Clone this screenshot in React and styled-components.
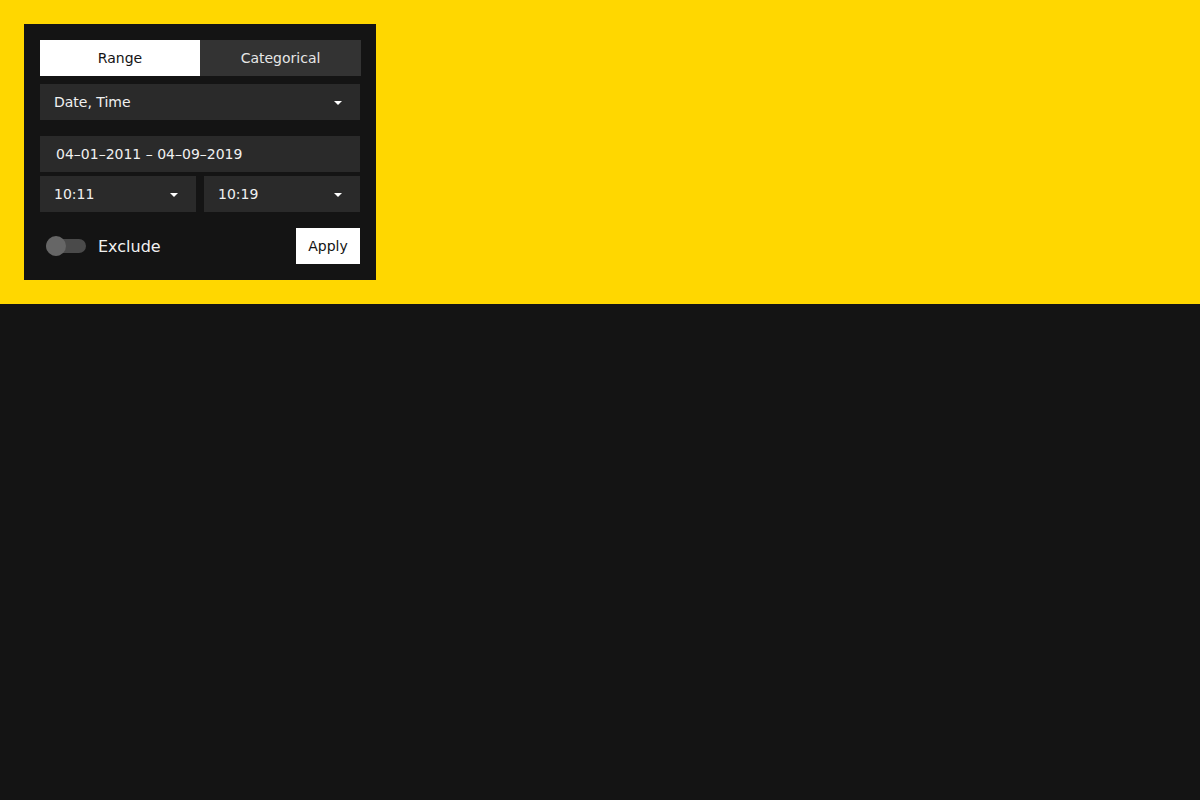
import React, { useState } from "react";
import styled, { createGlobalStyle } from "styled-components";

const Global = createGlobalStyle`
  html, body { margin: 0; padding: 0; background: #141414; }
  body { font-family: "DejaVu Sans", sans-serif; }
`;

const Page = styled.div`
  min-height: 800px;
  background: #141414;
`;

const Banner = styled.div`
  background: #ffd700;
  padding: 24px;
`;

const Panel = styled.div`
  width: 320px;
  background: #141414;
  padding: 16px;
  display: flex;
  flex-direction: column;
`;

const Tabs = styled.div`
  display: flex;
  height: 36px;
  margin-bottom: 8px;
  width: 321px;
`;

const Tab = styled.button`
  border: none;
  margin: 0;
  padding: 0;
  font-family: inherit;
  font-size: 14px;
  width: ${(p) => p.$w}px;
  background: ${(p) => (p.$active ? "#ffffff" : "#333333")};
  color: ${(p) => (p.$active ? "#141414" : "#e6e6e6")};
  cursor: pointer;
`;

const Field = styled.div`
  height: 36px;
  background: #2a2a2a;
  color: #f0f0f0;
  font-size: 14px;
  display: flex;
  align-items: center;
  justify-content: space-between;
  padding: 0 ${(p) => p.$pr || 18}px 0 ${(p) => p.$pl || 14}px;
  box-sizing: border-box;
  margin-top: ${(p) => p.$mt || 0}px;
`;

const Row = styled.div`
  display: grid;
  grid-template-columns: 1fr 1fr;
  gap: 8px;
  margin-top: 4px;
`;

const Footer = styled.div`
  display: flex;
  align-items: center;
  justify-content: space-between;
  margin-top: 16px;
`;

const SwitchLabel = styled.label`
  display: flex;
  align-items: center;
  gap: 12px;
  color: #f0f0f0;
  font-size: 16px;
  padding-left: 6px;
`;

const Track = styled.span`
  position: relative;
  width: 40px;
  height: 14px;
  border-radius: 7px;
  background: #4a4a4a;
`;

const Thumb = styled.span`
  position: absolute;
  left: 0;
  top: -3px;
  width: 20px;
  height: 20px;
  border-radius: 50%;
  background: #666666;
`;

const ApplyButton = styled.button`
  border: none;
  background: #ffffff;
  color: #141414;
  font-family: inherit;
  font-size: 14px;
  height: 36px;
  width: 64px;
  padding: 0;
  cursor: pointer;
`;

const ArrowWrap = styled.svg`
  display: block;
  margin-top: 1px;
`;

const Arrow = () => (
  <ArrowWrap width="8" height="4" viewBox="0 0 8 4">
    <path d="M0 0 L8 0 L4 4 Z" fill="#ffffff" />
  </ArrowWrap>
);

export default function App() {
  const [tab, setTab] = useState("range");
  return (
    <Page>
      <Global />
      <Banner>
        <Panel>
          <Tabs>
            <Tab $w={160} $active={tab === "range"} onClick={() => setTab("range")}>
              Range
            </Tab>
            <Tab $w={161} $active={tab === "cat"} onClick={() => setTab("cat")}>
              Categorical
            </Tab>
          </Tabs>
          <Field>
            <span>Date, Time</span>
            <Arrow />
          </Field>
          <Field $mt={16} $pl={16}>
            <span>04–01–2011 – 04–09–2019</span>
          </Field>
          <Row>
            <Field>
              <span>10:11</span>
              <Arrow />
            </Field>
            <Field>
              <span>10:19</span>
              <Arrow />
            </Field>
          </Row>
          <Footer>
            <SwitchLabel>
              <Track>
                <Thumb />
              </Track>
              Exclude
            </SwitchLabel>
            <ApplyButton>Apply</ApplyButton>
          </Footer>
        </Panel>
      </Banner>
    </Page>
  );
}
